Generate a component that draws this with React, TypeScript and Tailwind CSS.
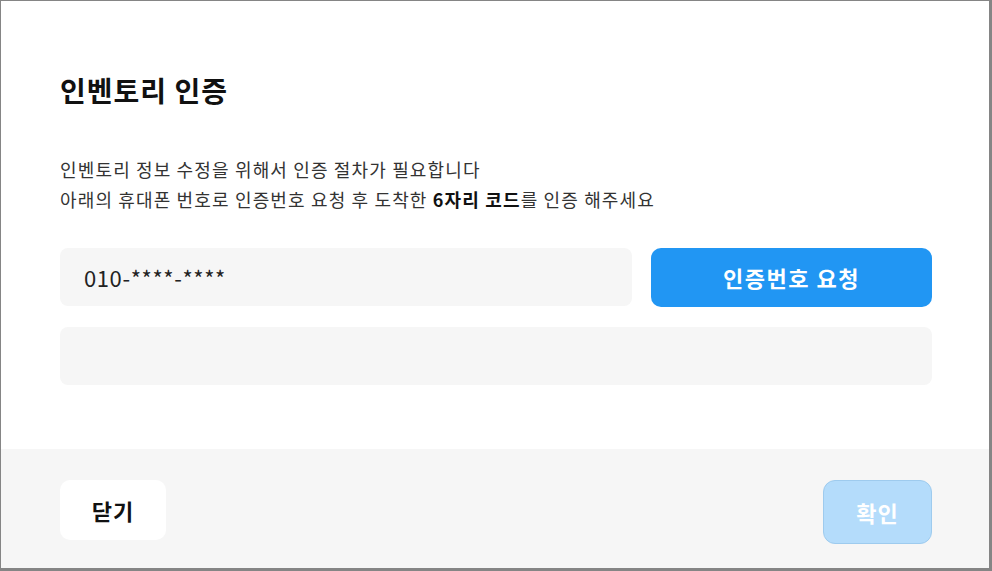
export default function App() {
  return (
    <div
      className="h-[571px] w-[992px] overflow-hidden bg-white"
      style={{ fontFamily: '"Noto Sans CJK KR", "Noto Sans", sans-serif' }}
    >
      <div className="flex h-full w-full flex-col border-t border-l border-r-[3px] border-b-[3px] border-[#858585]">
        {/* body */}
        <div className="flex-1 pl-[59px] pr-[57px] pt-[71px]">
          <h1 className="text-[28px] font-bold leading-[36px] tracking-[1px] text-[#111]">
            인벤토리 인증
          </h1>
          <p className="mt-[46px] text-[18px] leading-[30px] tracking-[1.15px] text-[#333]">
            인벤토리 정보 수정을 위해서 인증 절차가 필요합니다
            <br />
            아래의 휴대폰 번호로 인증번호 요청 후 도착한{" "}
            <b className="font-bold text-[#111]">6자리 코드</b>를 인증 해주세요
          </p>

          <div className="mt-[34px] flex items-start gap-[19px]">
            <div className="flex h-[58px] flex-1 items-center rounded-[8px] bg-[#f6f6f6] px-[24px] text-[22px] tracking-[0.6px] text-[#222]">
              010-****-****
            </div>
            <button
              type="button"
              className="h-[59px] w-[281px] rounded-[10px] bg-[#2196f3] text-[22px] font-bold tracking-[1.5px] text-white"
            >
              인증번호 요청
            </button>
          </div>

          <div className="mt-[20px] h-[58px] rounded-[8px] bg-[#f6f6f6]" />
        </div>

        {/* footer */}
        <div className="flex h-[119px] items-start justify-between bg-[#f6f6f6] pl-[59px] pr-[57px] pt-[31px]">
          <button
            type="button"
            className="h-[60px] w-[106px] rounded-[10px] bg-white text-[22px] font-bold tracking-[1px] text-[#111]"
          >
            닫기
          </button>
          <button
            type="button"
            disabled
            className="h-[64px] w-[109px] rounded-[12px] border border-[#9ecbee] bg-[#b4dcfb] text-[22px] font-bold tracking-[1px] text-white"
          >
            확인
          </button>
        </div>
      </div>
    </div>
  );
}
